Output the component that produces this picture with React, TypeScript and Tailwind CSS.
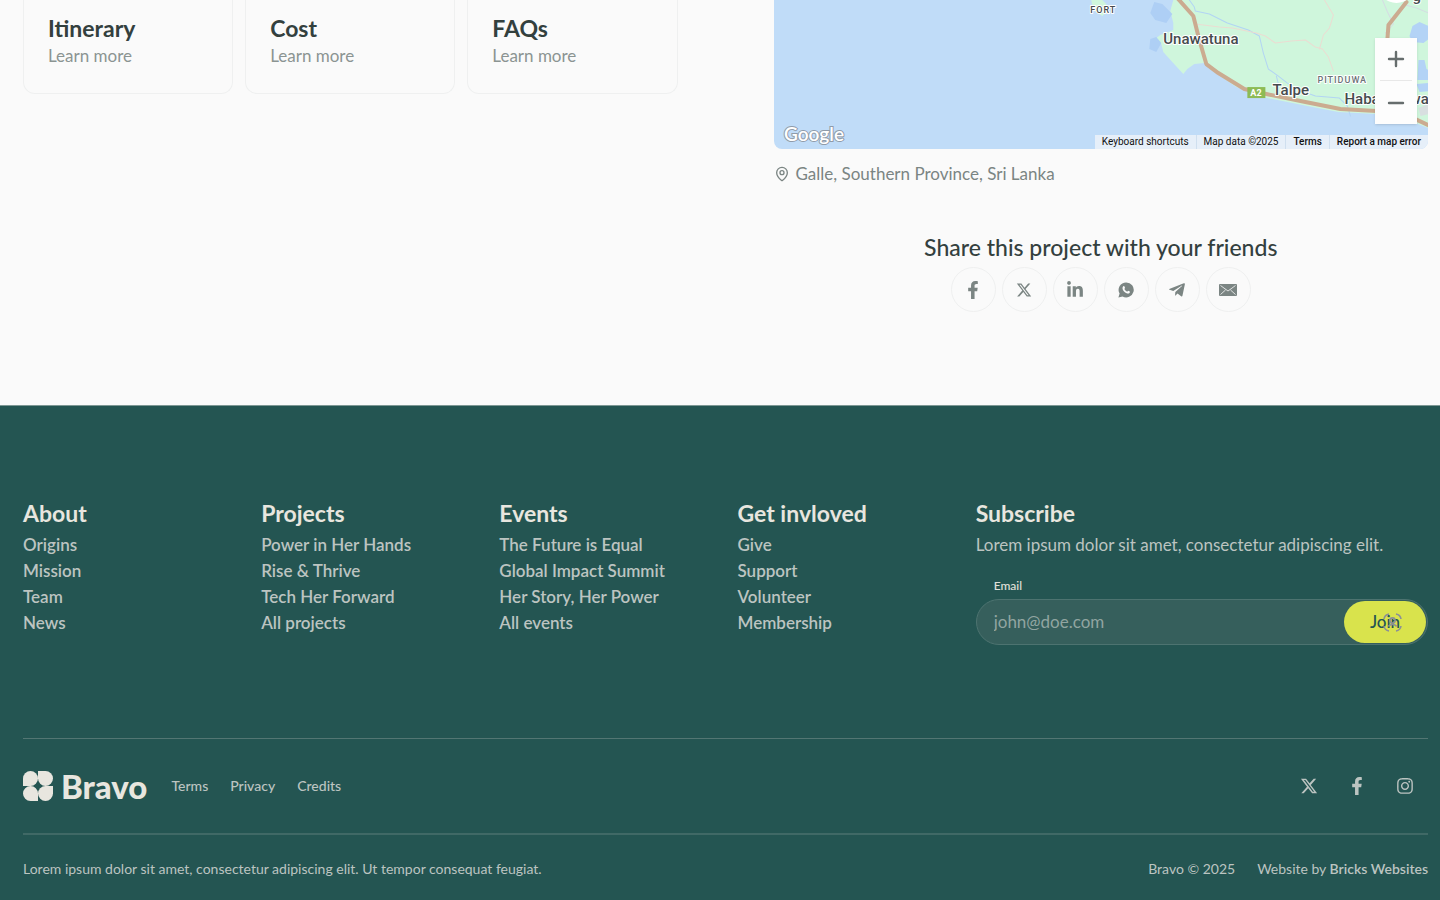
import type { ReactNode } from 'react'
import { MapPin, Minus, Plus } from 'lucide-react'
import { FaFacebookF, FaInstagram, FaLinkedinIn, FaTelegramPlane } from 'react-icons/fa'
import { FaXTwitter } from 'react-icons/fa6'

const cards = ['Itinerary', 'Cost', 'FAQs']

const columns = [
  { title: 'About', links: ['Origins', 'Mission', 'Team', 'News'] },
  { title: 'Projects', links: ['Power in Her Hands', 'Rise & Thrive', 'Tech Her Forward', 'All projects'] },
  { title: 'Events', links: ['The Future is Equal', 'Global Impact Summit', 'Her Story, Her Power', 'All events'] },
  { title: 'Get invloved', links: ['Give', 'Support', 'Volunteer', 'Membership'] },
]

export default function App() {
  return (
    <div className="min-h-screen overflow-hidden bg-[#fafafa] font-['Lato',sans-serif] text-[17px] text-[#7b8583]">
      <main className="grid grid-cols-2 gap-24 pr-3 pb-[93px] pl-[23px]">
        <Cards />
        <div>
          <ProjectMap />
          <p className="mt-3 flex items-center gap-1.5 leading-[26px]">
            <MapPin className="size-4" />
            Galle, Southern Province, Sri Lanka
          </p>
          <Share />
        </div>
      </main>
      <Footer />
    </div>
  )
}

function Cards() {
  return (
    <div className="grid grid-cols-3 items-start gap-3">
      {cards.map((card) => (
        <a key={card} href="#" className="rounded-b-xl border border-t-0 border-[#eff0f0] px-6 pt-[13px] pb-6">
          <h3 className="text-[23px] leading-[30px] font-bold text-[#33403e]">{card}</h3>
          <p className="leading-[26px] text-[#8b9492]">Learn more</p>
        </a>
      ))}
    </div>
  )
}

function ProjectMap() {
  return (
    <div className="relative h-[149px] overflow-hidden rounded-b-lg bg-[#c0dcf8] font-['Roboto',sans-serif]">
      <svg className="block h-full w-full" viewBox="774 0 654 149" preserveAspectRatio="xMaxYMin slice">
        <path
          d="M1173 0 L1170 11 L1173 23 L1173 30 L1160 35 L1156 38 L1161 44 L1163 52 L1172 62 L1183 74 L1187 69 L1194 64 L1204 63 L1211 70 L1236 87 L1262 97 L1307 106 L1338 112 L1376 114 L1400 117 L1428 128 L1428 0 Z"
          fill="#cff6dc"
        />
        <path d="M1091 0 l11 0 4 4 2 7 -6 5 -9 -6z" fill="#cff6dc" />
        <path d="M1154 2 l8 2 10 10 -6 9 -11 -3 -5 -7z M1150 39 l6 -2 5 6 -5 9 -7 -3z" fill="#aecff5" />
        <path d="M1409 36 l3 -10 7 -4 9 4 0 13 -5 4 -11 -1z M1418 60 l6 0 2 9 2 1 0 10 -11 0z M1416 84 l12 -1 0 8 -9 1z" fill="#b3d3f6" />
        <path d="M1418 108 l10 -4 0 10 -8 2z" fill="#d8dfe0" />
        <g fill="none" strokeLinecap="round" strokeLinejoin="round">
          <path d="M1189 0 l5 7 1 4 14 3 18 9 21 7 11 6 4 17 5 16 10 7 9 7 14 8 14 5 24 2 8 8 3 10" stroke="#b2d4f4" strokeWidth="1" />
          <path d="M1276 76 l2 8" stroke="#b2d4f4" />
          <path d="M1195 24 l24 3 13 1 24 5 9 3 10 7 16 -2 14 -1 10 7 7 2 6 8 5 14 M1324 0 l9 15 -4 13 -6 7 -4 14" stroke="#ebdcd2" strokeWidth="1" />
          <path d="M1382 0 l5 12 6 12 -8 9 M1405 5 l11 3 12 5" stroke="#d5dce3" strokeWidth="1" />
          <path d="M1177 -2 L1193 16 L1199 40 L1206 64 L1218 73 L1244 89 L1266 94 L1305 102 L1340 109 L1376 111 L1400 112 L1430 126" stroke="#cbab90" strokeWidth="4" />
          <path d="M1406 2 L1388 25 L1387 38" stroke="#cbab90" strokeWidth="4" />
        </g>
        <circle cx="1396" cy="-16" r="19" fill="#fff" />
        <rect x="1247" y="87" width="18" height="11" fill="#8dbb55" />
        <text x="1250" y="96" fontSize="9" fontWeight="700" fill="#fff">A2</text>
        <g fill="#454b4e" stroke="#fff" strokeWidth="2" paintOrder="stroke" strokeLinejoin="round" fontWeight="500">
          <text x="1163" y="44" fontSize="15">Unawatuna</text>
          <text x="1272" y="95" fontSize="15">Talpe</text>
          <text x="1344" y="104" fontSize="15">Habaraduwa</text>
          <text x="1412" y="1" fontSize="15">g</text>
          <text x="1090" y="13" fontSize="9" letterSpacing="1">FORT</text>
          <text x="1317" y="83" fontSize="9" letterSpacing="1" fill="#6b7377">PITIDUWA</text>
        </g>
        <text
          x="784"
          y="141"
          className="font-['Lato',sans-serif]"
          fontSize="19"
          fontWeight="600"
          fill="#fff"
          stroke="#8f9ba9"
          strokeWidth="2"
          paintOrder="stroke"
        >
          Google
        </text>
      </svg>
      <div className="absolute top-[38px] right-[11px] flex w-[42px] flex-col items-center bg-[#fdfdfd] text-[#666d6d] shadow-sm">
        <button type="button" aria-label="Zoom in" className="flex h-[42px] items-center justify-center">
          <Plus className="size-6" strokeWidth={2.4} />
        </button>
        <hr className="w-8 border-[#e8e8e8]" />
        <button type="button" aria-label="Zoom out" className="flex h-[43px] items-center justify-center">
          <Minus className="size-6" strokeWidth={2.4} />
        </button>
      </div>
      <div className="absolute right-0 bottom-0 flex h-[14px] items-center divide-x divide-[#cfdfef] bg-[#e6eff9] text-[10px] leading-[14px] text-[#111]">
        <button type="button" className="px-[7px]">Keyboard shortcuts</button>
        <span className="px-[7px]">Map data ©2025</span>
        <a href="#" className="px-[7px] font-medium">Terms</a>
        <a href="#" className="px-[7px] font-medium">Report a map error</a>
      </div>
    </div>
  )
}

function Share() {
  return (
    <section className="mt-11 flex flex-col items-center">
      <h2 className="mb-1 text-[23px] leading-8 font-medium text-[#33403e]">Share this project with your friends</h2>
      <div className="flex gap-1.5">
        <ShareLink label="Facebook"><FaFacebookF className="size-[18px]" /></ShareLink>
        <ShareLink label="X"><FaXTwitter className="size-4" /></ShareLink>
        <ShareLink label="LinkedIn"><FaLinkedinIn className="size-[18px]" /></ShareLink>
        <ShareLink label="WhatsApp"><WhatsappIcon /></ShareLink>
        <ShareLink label="Telegram"><FaTelegramPlane className="size-[18px]" /></ShareLink>
        <ShareLink label="Email"><MailIcon /></ShareLink>
      </div>
    </section>
  )
}

function ShareLink({ label, children }: { label: string; children: ReactNode }) {
  return (
    <a href="#" aria-label={label} className="flex size-[45px] items-center justify-center rounded-full border border-[#eff0f0]">
      {children}
    </a>
  )
}

function WhatsappIcon() {
  return (
    <svg className="size-4" viewBox="0 0 16 16">
      <path d="M8.2 0.4 A7.5 7.5 0 1 1 4.5 14.4 L0.4 15.6 L1.6 11.6 A7.5 7.5 0 0 1 8.2 0.4 Z" fill="currentColor" />
      <path
        d="M5.3 4.2 C5.8 3.7 6.3 3.9 6.5 4.4 L7 5.7 C7.1 6.1 6.4 6.6 6.4 6.9 C6.9 8.1 7.9 9 9.2 9.5 C9.6 9.5 9.9 8.7 10.3 8.7 L11.8 9.4 C12.2 9.8 11.6 11.1 10.9 11.4 C8.4 12.2 4.4 8.7 4.5 5.9 C4.5 5.2 4.9 4.5 5.3 4.2 Z"
        fill="#fafafa"
      />
    </svg>
  )
}

function MailIcon() {
  return (
    <svg className="h-3 w-[18px]" viewBox="0 0 18 12">
      <rect width="18" height="12" rx="1" fill="currentColor" />
      <path d="M1.5 1.5 L9 7 L16.5 1.5 M1.5 10.5 L6.5 6 M16.5 10.5 L11.5 6" fill="none" stroke="#fafafa" strokeWidth="0.8" />
    </svg>
  )
}

function Footer() {
  return (
    <footer className="border-t border-[#7d9794] bg-[#245552] pr-3 pl-[23px] text-[#bcc4c1]">
      <div className="grid grid-cols-6 gap-6 pt-[92px] pb-[93px]">
        {columns.map((column) => (
          <nav key={column.title}>
            <h3 className="text-[23px] leading-[30px] font-bold text-[#e8e6df]">{column.title}</h3>
            <ul className="mt-1 leading-[26px] font-semibold">
              {column.links.map((link) => (
                <li key={link}>
                  <a href="#">{link}</a>
                </li>
              ))}
            </ul>
          </nav>
        ))}
        <Subscribe />
      </div>
      <div className="flex items-center border-t border-[#537673] py-8">
        <a href="#" className="flex items-center gap-2 text-[#e8e6df]">
          <LogoMark />
          <span className="text-[33px] leading-[30px] font-black">Bravo</span>
        </a>
        <nav className="ml-6 flex gap-[22px] text-sm font-medium">
          <a href="#">Terms</a>
          <a href="#">Privacy</a>
          <a href="#">Credits</a>
        </nav>
        <div className="mr-3.5 ml-auto flex gap-[30px]">
          <a href="#" aria-label="X"><FaXTwitter className="size-[18px]" /></a>
          <a href="#" aria-label="Facebook"><FaFacebookF className="size-[18px]" /></a>
          <a href="#" aria-label="Instagram"><FaInstagram className="size-[18px]" /></a>
        </div>
      </div>
      <div className="flex border-t-2 border-[#406966] pt-6 pb-[22px] text-sm leading-5">
        <p>Lorem ipsum dolor sit amet, consectetur adipiscing elit. Ut tempor consequat feugiat.</p>
        <p className="ml-auto">Bravo © 2025</p>
        <p className="ml-[22px]">
          Website by <a href="#" className="font-semibold">Bricks Websites</a>
        </p>
      </div>
    </footer>
  )
}

function Subscribe() {
  return (
    <form className="col-span-2">
      <h3 className="text-[23px] leading-[30px] font-bold text-[#e8e6df]">Subscribe</h3>
      <p className="mt-1 leading-[26px]">Lorem ipsum dolor sit amet, consectetur adipiscing elit.</p>
      <label htmlFor="email" className="mt-5 block pl-[18px] text-xs leading-4 font-medium text-[#e0e0da]">
        Email
      </label>
      <div className="mt-[5px] flex h-[46px] rounded-full border border-[#4d7370] bg-[#365f5c] p-px">
        <input
          id="email"
          type="email"
          placeholder="john@doe.com"
          className="min-w-0 flex-1 bg-transparent pl-4 outline-none placeholder:text-[#91a5a1]"
        />
        <button type="submit" className="relative w-[82px] rounded-full bg-[#d9e34c] font-medium text-[#245552]">
          Join
          <FocusIcon />
        </button>
      </div>
    </form>
  )
}

function FocusIcon() {
  return (
    <svg className="absolute top-3 right-6 size-[19px] text-[#8b8f97]" viewBox="0 0 19 19" fill="none" stroke="currentColor" strokeWidth="1.6">
      <path d="M1 6 A6 6 0 0 1 6 1 M13 1 A6 6 0 0 1 18 6 M18 13 A6 6 0 0 1 13 18 M6 18 A6 6 0 0 1 1 13" />
      <circle cx="9.5" cy="7.5" r="2.6" />
      <path d="M5.5 13.5 C6.5 10.8 12.5 10.8 13.5 13.5" />
    </svg>
  )
}

function LogoMark() {
  return (
    <svg className="size-[30px]" viewBox="0 0 30 30" fill="currentColor">
      <path d="M0 15 V7.5 A7.5 7.5 0 1 1 7.5 15 Z" />
      <path d="M15 0 H22.5 A7.5 7.5 0 1 1 15 7.5 Z" />
      <path d="M30 15 V22.5 A7.5 7.5 0 1 1 22.5 15 Z" />
      <path d="M15 30 H7.5 A7.5 7.5 0 1 1 15 22.5 Z" />
    </svg>
  )
}
